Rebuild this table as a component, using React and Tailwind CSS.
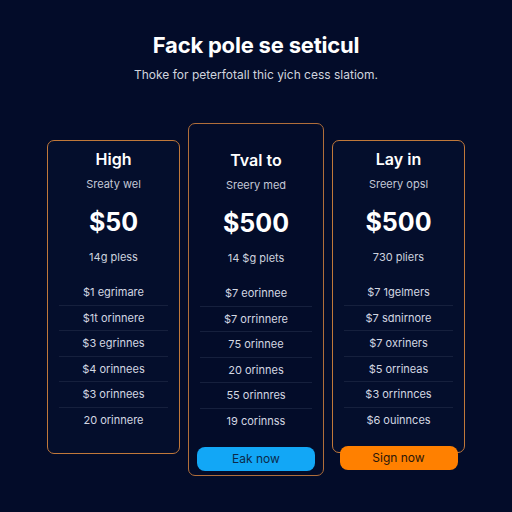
import React from "react";

const plans = [
  {
    name: "High",
    sub: "Sreaty wel",
    price: "$50",
    note: "14g pless",
    rows: ["$1 egrimare", "$1t orinnere", "$3 egrinnes", "$4 orinnees", "$3 orinnees", "20 orinnere"],
  },
  {
    name: "Tval to",
    sub: "Sreery med",
    price: "$500",
    note: "14 $g plets",
    rows: ["$7 eorinnee", "$7 orrinnere", "75 orinnee", "20 orinnes", "55 orinnres", "19 corinnss"],
    featured: true,
    cta: "Eak now",
  },
  {
    name: "Lay in",
    sub: "Sreery opsl",
    price: "$500",
    note: "730 pliers",
    rows: ["$7 1gelmers", "$7 sdnirnore", "$7 oxriners", "$5 orrineas", "$3 orrinnces", "$6 ouinnces"],
    cta: "Sign now",
  },
];

const CardBody = ({ plan }) => (
  <>
    <div className="text-[16px] leading-[20px] font-semibold text-white">{plan.name}</div>
    <div className="mt-[7px] text-[11px] leading-[16px] text-[#c3c8d6]">{plan.sub}</div>
    <div className="mt-[14px] text-[25px] leading-[32px] font-bold text-white">{plan.price}</div>
    <div className="mt-[11px] text-[11px] leading-[16px] text-[#cdd2de]">{plan.note}</div>
    <div className="mt-[14px] w-full px-[11px]">
      {plan.rows.map((r, i) => (
        <div
          key={i}
          className={
            "h-[25.6px] flex items-center justify-center text-[11px] text-[#d3d7e2] " +
            (i > 0 ? "border-t border-[#16203d]" : "")
          }
        >
          {r}
        </div>
      ))}
    </div>
  </>
);

export default function App() {
  return (
    <div
      className="w-[512px] h-[512px] bg-[#030c29] overflow-hidden flex flex-col items-center"
      style={{ fontFamily: "Inter, 'Open Sans', sans-serif" }}
    >
      <h1 className="mt-[30px] text-[22px] leading-[30px] font-bold text-white tracking-[-0.2px]">
        Fack pole se seticul
      </h1>
      <p className="mt-[7px] text-[12px] leading-[16px] text-[#d0d4de]">
        Thoke for peterfotall thic yich cess slatiom.
      </p>

      <div className="mt-[40px] flex items-start gap-[8px]">
        {/* left */}
        <div className="mt-[17px] w-[133px] h-[314px] rounded-[7px] border border-[#c0783a] bg-[#040e2c] flex flex-col items-center pt-[8px]">
          <CardBody plan={plans[0]} />
        </div>

        {/* middle */}
        <div className="w-[136px] h-[353px] rounded-[7px] border border-[#b06e3a] bg-[#030c29] flex flex-col items-center pt-[26px]">
          <CardBody plan={plans[1]} />
          <button className="mt-[13px] w-[118px] h-[24px] rounded-[8px] bg-[#12a7f6] text-[12px] text-[#0b2a4a]">
            {plans[1].cta}
          </button>
        </div>

        {/* right */}
        <div className="mt-[17px] w-[133px] flex flex-col items-center">
          <div className="w-full h-[313px] rounded-[7px] border border-[#c0783a] bg-[#040e2c] flex flex-col items-center pt-[8px]">
            <CardBody plan={plans[2]} />
          </div>
          <button className="relative -mt-[7px] w-[118px] h-[24px] rounded-[8px] bg-[#ff8000] text-[12px] text-[#2a160a]">
            {plans[2].cta}
          </button>
        </div>
      </div>
    </div>
  );
}
